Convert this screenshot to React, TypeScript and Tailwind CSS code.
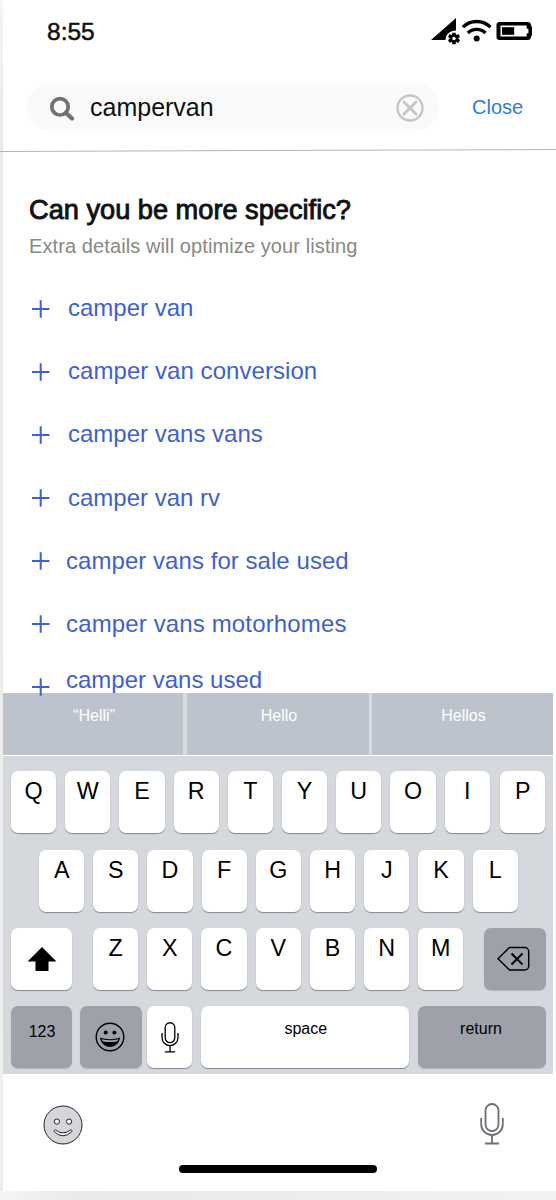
import React from 'react';

const suggestions = [
  { text: 'camper van', style: 'pl-[18px] pt-[1px]' },
  { text: 'camper van conversion', style: 'pl-[18px] pt-[1px] tracking-[0.05px]' },
  { text: 'camper vans vans', style: 'pl-[18px] pt-[1px]' },
  { text: 'camper van rv', style: 'pl-[18px] pt-[2px]' },
  { text: 'camper vans for sale used', style: 'pl-[16px] pt-[2px] tracking-[0.05px]' },
  { text: 'camper vans motorhomes', style: 'pl-[16px] pt-[2px] tracking-[0.14px]' },
];

function Plus() {
  return (
    <svg width="18" height="18" viewBox="0 0 18 18" className="block shrink-0" stroke="#3f60d0" strokeWidth="2">
      <path d="M0 9h17.4M8.700.3v17.4" />
    </svg>
  );
}

function Key({ children, className = '' }: { children: React.ReactNode; className?: string }) {
  return (
    <div className={`flex h-[62px] w-[45.3px] shrink-0 justify-center rounded-[7px] bg-white pt-[7px] text-[23.3px] leading-[26px] text-black shadow-[0_1px_1px_#858991] ${className}`}>
      {children}
    </div>
  );
}

function Mic({ className, color, stroke }: { className: string; color: string; stroke: number }) {
  return (
    <svg viewBox="0 0 24 42" className={className} fill="none" stroke={color} strokeWidth={stroke}>
      <rect x="5.5" y="1" width="13" height="27" rx="6.5" />
      <path d="M1.200 15v6.200a10.800 10.800 0 0 0 21.600 0V15M12 32v8M5 40.500h14" />
    </svg>
  );
}

function StatusIcons() {
  return (
    <svg width="103" height="28" viewBox="0 0 103 28" className="block">
      <path d="M0 22 25 0v12.500c-6 0-10.500 4-10.500 9.500Z" />
      <g transform="translate(23 20.500)">
        <g stroke="#000" strokeWidth="3.400">
          <path d="M0-5.800V5.800M-5.200-3 5.200 3M-5.200 3 5.200-3" />
        </g>
        <circle r="4.400" />
        <circle r="1.700" fill="#fff" />
      </g>
      <g fill="none" stroke="#000" strokeWidth="3.300">
        <path d="M31.900 9.200a19.500 19.500 0 0 1 27.600 0M36.900 15a12.400 12.400 0 0 1 17.600 0" />
      </g>
      <circle cx="45.700" cy="20.500" r="3" />
      <path
        d="M68.500 4h28a3.500 3.500 0 0 1 3.500 3.500l1 1.500v8l-1 1.500a3.500 3.500 0 0 1-3.500 3.500h-28a3 3 0 0 1-3-3V7a3 3 0 0 1 3-3ZM69.500 7.500v11h26.200v-3.300h1.700v-4.400h-1.700V7.500Z"
        fillRule="evenodd"
      />
      <path d="M71 9.200h12.200v7.600H71Z" />
    </svg>
  );
}

export default function App() {
  return (
    <div className="flex h-[1200px] w-[556px] flex-col overflow-hidden bg-white font-['Liberation_Sans',sans-serif] text-[#101114]">
      <div className="flex h-[1191px] shrink-0">
        <div className="w-[3px] shrink-0 bg-linear-to-b from-[#f5f5f5] via-[#eaeaea] via-10% to-[#eeeeee]" />
        <div className="flex w-[550px] shrink-0 flex-col bg-white">
          <header className="flex h-[83px] shrink-0 justify-between pl-[44px] pr-[19px]">
            <span className="pt-[18px] text-[24.5px] leading-[28px] [-webkit-text-stroke:0.5px_#101114]">8:55</span>
            <div className="pt-[18px]">
              <StatusIcons />
            </div>
          </header>

          <div className="flex h-[67px] shrink-0 pl-[24px]">
            <div className="flex h-[48px] w-[412px] rounded-full bg-[#fafafa] pl-[22px] pr-[15px]">
              <svg width="26" height="26" viewBox="0 0 26 26" className="mt-[13px] shrink-0" fill="none" stroke="#717371">
                <circle cx="11" cy="10.800" r="8.200" strokeWidth="3.700" />
                <path d="m17 17 6 5.500" strokeWidth="4.300" strokeLinecap="round" />
              </svg>
              <span className="grow pl-[15px] pt-[10px] text-[25px] leading-[28px]">campervan</span>
              <svg width="28" height="28" viewBox="0 0 28 28" className="mt-[11px] shrink-0" fill="none" stroke="#c4c5c7" strokeWidth="2.300">
                <circle cx="14" cy="14" r="12.500" />
                <path d="m8 8 12 12M20 8 8 20" strokeWidth="2.900" strokeLinecap="round" />
              </svg>
            </div>
            <span className="pl-[33px] pt-[12px] text-[20px] leading-[24px] text-[#2d7dd2]">Close</span>
          </div>
          <div className="-ml-[3px] h-px w-[557px] shrink-0 -rotate-[0.2deg] bg-[#b4b4b4]" />

          <main className="flex h-[542px] shrink-0 flex-col pl-[26px]">
            <h1 className="mt-[43px] whitespace-nowrap text-[27.2px] font-normal leading-[32px] [-webkit-text-stroke:0.9px_#101114]">
              Can you be more specific?
            </h1>
            <p className="mt-[8px] text-[20px] leading-[24px] tracking-[0.1px] text-[#888888]">
              Extra details will optimize your listing
            </p>
            <ul className="mt-[23px] flex flex-col pl-[3px] text-[24px] text-[#3f60d0]">
              {suggestions.map((s) => (
                <li key={s.text} className="flex h-[63.1px] shrink-0">
                  <div className="pt-[18.5px]">
                    <Plus />
                  </div>
                  <span className={`${s.style} mt-[12px] whitespace-nowrap leading-[28px]`}>{s.text}</span>
                </li>
              ))}
              <li className="relative z-10 flex h-[40px] shrink-0">
                <div className="pt-[18px]">
                  <Plus />
                </div>
                <span className="mt-[6px] pl-[16px] leading-[28px]">camper vans used</span>
              </li>
            </ul>
          </main>

          <section className="flex h-[381px] shrink-0 flex-col bg-[#d5d8dd]">
            <div className="flex h-[62px] shrink-0 bg-[#d8dadd] text-center text-[16px] leading-[18px] text-white">
              <div className="w-[180px] bg-[#bdc3cc] pt-[14px] pl-[2px]">“Helli”</div>
              <div className="ml-[4px] w-[182px] bg-[#bdc3cc] pt-[14px] pl-[2px]">Hello</div>
              <div className="ml-[3px] w-[181px] bg-[#bdc3cc] pt-[14px] pl-[2px]">Hellos</div>
            </div>
            <div className="h-px shrink-0 bg-white" />
            <div className="mt-[15px] flex shrink-0 gap-[8.9px] pl-[8px]">
              {'QWERTYUOI'.split('').map((k) => <Key key={k}>{k}</Key>)}
              <Key className="ml-[1.5px]">P</Key>
            </div>
            <div className="mt-[17px] flex shrink-0 gap-[8.9px] pl-[36px]">
              {'ASDFGHJKL'.split('').map((k) => <Key key={k}>{k}</Key>)}
            </div>
            <div className="mt-[16px] flex h-[62px] shrink-0 pl-[8px]">
              <div className="flex w-[61px] items-center justify-center rounded-[7px] bg-white shadow-[0_1px_1px_#858991]">
                <svg width="30" height="24" viewBox="0 0 30 24" className="block">
                  <path d="M15 0 29.500 14.500H21.500V24H8.500V14.500H.5Z" />
                </svg>
              </div>
              <div className="ml-[21px] flex gap-[8.9px]">
                {'ZXCVBNM'.split('').map((k) => <Key key={k}>{k}</Key>)}
              </div>
              <div className="ml-[20.5px] flex w-[62px] items-center justify-center rounded-[7px] bg-[#9ea1a9] shadow-[0_1px_1px_#b2b5bb]">
                <svg width="34" height="26" viewBox="0 0 34 26" className="mr-[2px]" fill="none" stroke="#000" strokeWidth="1.500">
                  <path d="M12.500 1.500h15.200a4 4 0 0 1 4 4v14.500a4 4 0 0 1-4 4H12.500L1 12.800Z" />
                  <path d="m14.500 7.500 11 11M25.500 7.500l-11 11" strokeWidth="2" />
                </svg>
              </div>
            </div>
            <div className="mt-[16px] flex h-[62px] shrink-0 pl-[8px] text-center text-[16px] leading-[18px] text-black">
              <div className="w-[61px] rounded-[7px] bg-[#9ea1a9] pt-[16.5px] pl-[1px] shadow-[0_1px_1px_#b2b5bb]">123</div>
              <div className="ml-[8px] flex w-[61.5px] items-center justify-center rounded-[7px] bg-[#9ea1a9] shadow-[0_1px_1px_#b2b5bb]">
                <svg width="30" height="30" viewBox="0 0 30 30" className="mr-[1.5px] block">
                  <circle cx="15" cy="15" r="13.800" fill="none" stroke="#000" strokeWidth="1.400" />
                  <circle cx="10.700" cy="10.600" r="2" />
                  <circle cx="19.400" cy="10.600" r="2" />
                  <path d="M5 15.500c6 2.300 14 2.300 20 0C24.500 21 20 25 15 25S5.500 21 5 15.500Z" />
                  <path d="M6.700 17.200c5.300 1.500 11.300 1.500 16.600 0-.300 1-.700 1.700-1.200 2.300-4.500.700-9.700.700-14.200 0-.5-.6-.9-1.300-1.200-2.300Z" fill="#9ea1a9" />
                </svg>
              </div>
              <div className="ml-[5.5px] flex w-[45.3px] items-center justify-center rounded-[7px] bg-white shadow-[0_1px_1px_#858991]">
                <Mic className="h-[31px] w-[18px]" color="#000" stroke={1.8} />
              </div>
              <div className="ml-[8.7px] w-[208.5px] rounded-[7px] bg-white pt-[13.5px] pl-[1px] shadow-[0_1px_1px_#858991]">space</div>
              <div className="ml-[8.5px] w-[128px] rounded-[7px] bg-[#9ea1a9] pt-[13.5px] pr-[2px] shadow-[0_1px_1px_#b2b5bb]">return</div>
            </div>
          </section>

          <footer className="flex grow flex-col">
            <div className="flex h-[91px] justify-between pl-[40px] pr-[49px]">
              <svg width="40" height="40" viewBox="0 0 40 40" className="mt-[31px]" stroke="#222" strokeWidth="1" fill="#fff">
                <circle cx="20" cy="20" r="19" fill="#d4d6db" />
                <circle cx="13.900" cy="16.600" r="2.600" />
                <circle cx="26.100" cy="16.600" r="2.600" />
                <path d="M12.200 24.800q7.800 6.200 15.600 0c1.300.200 1.400 1.200.7 2.200q-8.500 7.600-17 0c-.7-1-.6-2 .7-2.200Z" />
              </svg>
              <Mic className="mt-[29px] h-[42px] w-[24px]" color="#6d6e76" stroke={1.8} />
            </div>
            <div className="ml-[176px] h-[8px] w-[198px] rounded-full bg-black" />
          </footer>
        </div>
      </div>
      <div className="h-[9px] shrink-0 bg-linear-to-r from-[#f5f5f5] via-[#e9e9e9] via-15% to-[#f2f2f2]" />
    </div>
  );
}
